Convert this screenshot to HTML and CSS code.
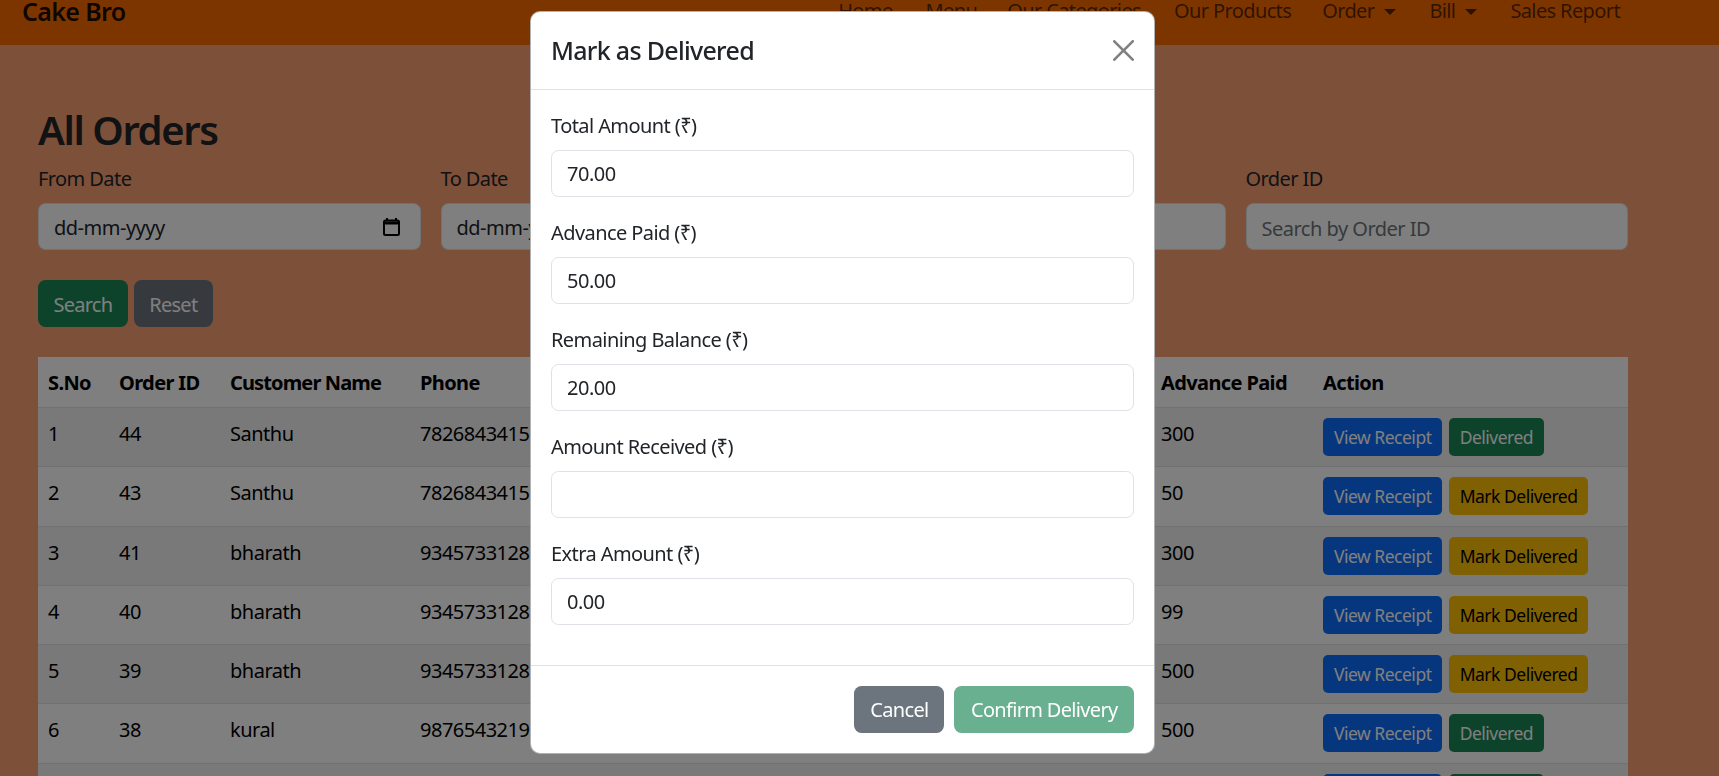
FILE: index.html
```html
<!DOCTYPE html>
<html lang="en">
<head>
  <meta charset="UTF-8">
  <meta name="viewport" content="width=device-width, initial-scale=1.0">
  <title>All Orders</title>
  <link rel="stylesheet" href="styles.css">
</head>
<body>
  <nav class="navbar">
    <a class="brand" href="#">Cake Bro</a>
    <ul class="nav-links">
      <li><a href="#">Home</a></li>
      <li><a href="#">Menu</a></li>
      <li><a href="#">Our Categories</a></li>
      <li><a href="#">Our Products</a></li>
      <li><a class="dropdown" href="#">Order</a></li>
      <li><a class="dropdown" href="#">Bill</a></li>
      <li><a href="#">Sales Report</a></li>
    </ul>
  </nav>

  <main class="content">
    <h2>All Orders</h2>
    <form class="filters">
      <div>
        <label class="form-label">From Date</label>
        <div class="form-control date-field">
          <span>dd-mm-yyyy</span>
          <svg class="calendar" width="17" height="18" viewBox="0 0 17 18"><path d="M4 0v3M13 0v3" stroke="#000" stroke-width="2"/><rect x="1" y="2.5" width="15" height="14.500" rx="1.5" fill="none" stroke="#000" stroke-width="2"/><path d="M1 5h15" stroke="#000" stroke-width="3"/></svg>
        </div>
      </div>
      <div>
        <label class="form-label">To Date</label>
        <div class="form-control date-field">
          <span>dd-mm-yyyy</span>
          <svg class="calendar" width="17" height="18" viewBox="0 0 17 18"><path d="M4 0v3M13 0v3" stroke="#000" stroke-width="2"/><rect x="1" y="2.5" width="15" height="14.500" rx="1.5" fill="none" stroke="#000" stroke-width="2"/><path d="M1 5h15" stroke="#000" stroke-width="3"/></svg>
        </div>
      </div>
      <div>
        <label class="form-label">Customer Name</label>
        <input class="form-control" type="text">
      </div>
      <div>
        <label class="form-label">Order ID</label>
        <input class="form-control" type="text" placeholder="Search by Order ID">
      </div>
    </form>
    <div class="filter-actions">
      <button class="btn btn-success">Search</button>
      <button class="btn btn-secondary">Reset</button>
    </div>

    <table class="orders">
      <colgroup>
        <col class="col-sno">
        <col class="col-id">
        <col class="col-name">
        <col class="col-phone">
        <col class="col-total">
        <col class="col-advance">
        <col class="col-action">
      </colgroup>
      <thead>
        <tr><th>S.No</th><th>Order ID</th><th>Customer Name</th><th>Phone</th><th></th><th>Advance Paid</th><th>Action</th></tr>
      </thead>
      <tbody>
        <tr>
          <td>1</td><td>44</td><td>Santhu</td><td>7826843415</td><td></td><td>300</td>
          <td><button class="btn btn-sm btn-primary">View Receipt</button> <button class="btn btn-sm btn-success">Delivered</button></td>
        </tr>
        <tr>
          <td>2</td><td>43</td><td>Santhu</td><td>7826843415</td><td></td><td>50</td>
          <td><button class="btn btn-sm btn-primary">View Receipt</button> <button class="btn btn-sm btn-warning">Mark Delivered</button></td>
        </tr>
        <tr>
          <td>3</td><td>41</td><td>bharath</td><td>9345733128</td><td></td><td>300</td>
          <td><button class="btn btn-sm btn-primary">View Receipt</button> <button class="btn btn-sm btn-warning">Mark Delivered</button></td>
        </tr>
        <tr>
          <td>4</td><td>40</td><td>bharath</td><td>9345733128</td><td></td><td>99</td>
          <td><button class="btn btn-sm btn-primary">View Receipt</button> <button class="btn btn-sm btn-warning">Mark Delivered</button></td>
        </tr>
        <tr>
          <td>5</td><td>39</td><td>bharath</td><td>9345733128</td><td></td><td>500</td>
          <td><button class="btn btn-sm btn-primary">View Receipt</button> <button class="btn btn-sm btn-warning">Mark Delivered</button></td>
        </tr>
        <tr>
          <td>6</td><td>38</td><td>kural</td><td>9876543219</td><td></td><td>500</td>
          <td><button class="btn btn-sm btn-primary">View Receipt</button> <button class="btn btn-sm btn-success">Delivered</button></td>
        </tr>
        <tr>
          <td></td><td></td><td></td><td></td><td></td><td></td>
          <td><button class="btn btn-sm btn-primary">View Receipt</button> <button class="btn btn-sm btn-success">Delivered</button></td>
        </tr>
      </tbody>
    </table>
  </main>

  <div class="backdrop"></div>

  <div class="modal">
    <div class="modal-content">
      <div class="modal-header">
        <h5>Mark as Delivered</h5>
        <svg class="btn-close" width="21" height="21" viewBox="0 0 16 16"><path d="M.293.293a1 1 0 0 1 1.414 0L8 6.586 14.293.293a1 1 0 1 1 1.414 1.414L9.414 8l6.293 6.293a1 1 0 0 1-1.414 1.414L8 9.414l-6.293 6.293a1 1 0 0 1-1.414-1.414L6.586 8 .293 1.707a1 1 0 0 1 0-1.414z"/></svg>
      </div>
      <div class="modal-body">
        <div class="field">
          <label class="form-label">Total Amount (₹)</label>
          <input class="form-control" type="text" value="70.00">
        </div>
        <div class="field">
          <label class="form-label">Advance Paid (₹)</label>
          <input class="form-control" type="text" value="50.00">
        </div>
        <div class="field">
          <label class="form-label">Remaining Balance (₹)</label>
          <input class="form-control" type="text" value="20.00">
        </div>
        <div class="field">
          <label class="form-label">Amount Received (₹)</label>
          <input class="form-control" type="text">
        </div>
        <div class="field">
          <label class="form-label">Extra Amount (₹)</label>
          <input class="form-control" type="text" value="0.00">
        </div>
      </div>
      <div class="modal-footer">
        <button class="btn btn-secondary">Cancel</button>
        <button class="btn btn-success btn-disabled">Confirm Delivery</button>
      </div>
    </div>
  </div>
</body>
</html>
```

FILE: styles.css
```css
* {
  margin: 0;
  padding: 0;
  box-sizing: border-box;
}

body {
  background-color: #faa072;
  color: #212529;
  font-family: "Noto Sans", Arial, sans-serif;
  font-size: 20px;
  line-height: 30px;
  letter-spacing: -0.5px;
  overflow: hidden;
  height: 100vh;
}

/* Navbar, page is scrolled a little so it sits above the top edge */
.navbar {
  background-color: #fa6a00;
  height: 69px;
  margin-top: -24px;
  padding: 0 99px 0 22px;
  display: flex;
  align-items: center;
  justify-content: space-between;
}

.brand {
  color: rgba(0, 0, 0, 0.9);
  font-size: 25px;
  font-weight: 600;
  letter-spacing: -0.65px;
  text-decoration: none;
}

.nav-links {
  display: flex;
  gap: 33px;
  list-style: none;
  letter-spacing: -0.62px;
}

.nav-links li:nth-child(3) {
  margin-left: -3px;
}

.nav-links li:nth-child(5) {
  margin-left: -2px;
}

.nav-links a {
  color: rgba(0, 0, 0, 0.65);
  text-decoration: none;
}

.dropdown::after {
  content: "";
  display: inline-block;
  margin-left: 10px;
  vertical-align: 3px;
  border-top: 6px solid;
  border-left: 6px solid transparent;
  border-right: 6px solid transparent;
}

.content {
  padding: 61px 91px 0 38px;
}

h2 {
  font-size: 40px;
  font-weight: 600;
  line-height: 48px;
  letter-spacing: -1.4px;
  margin-bottom: 9px;
}

.filters {
  display: grid;
  grid-template-columns: repeat(4, 1fr);
  gap: 20px;
}

.filters .form-control {
  padding-top: 9px;
  padding-bottom: 6px;
}

.form-label {
  display: block;
  padding-top: 1px;
  margin-bottom: 9px;
  letter-spacing: -0.58px;
}

.form-control {
  width: 100%;
  height: 47px;
  padding: 7.5px 15px;
  background-color: #fff;
  border: 1px solid #dee2e6;
  border-radius: 7.5px;
  color: #212529;
  font: inherit;
  letter-spacing: -0.5px;
}

.form-control::placeholder {
  color: #6c757d;
}

.date-field {
  display: flex;
  align-items: center;
  justify-content: space-between;
}

.calendar {
  margin-right: 5px;
  margin-bottom: 2px;
}

.filter-actions {
  display: flex;
  gap: 6px;
  margin-top: 30px;
  margin-bottom: 30px;
}

.btn {
  height: 47px;
  padding: 2px 14.500px 0;
  border: 1px solid transparent;
  border-radius: 7.5px;
  color: #fff;
  font: inherit;
  letter-spacing: -0.75px;
}

.btn-sm {
  height: 38px;
  padding: 0 10px;
  border-radius: 5px;
  font-size: 17.5px;
  line-height: 26px;
  letter-spacing: -0.5px;
}

.btn-sm + .btn-sm {
  margin-left: 2px;
  padding: 0 9.5px;
}

.btn-primary { background-color: #0d6efd; }
.btn-secondary { background-color: #6c757d; }
.btn-success { background-color: #198754; }
.btn-warning { background-color: #ffc107; color: #000; }
.btn-disabled { opacity: 0.65; }

/* Orders table */
.orders {
  width: 100%;
  table-layout: fixed;
  border-collapse: collapse;
  background-color: #fff;
  color: #000;
}

.col-sno { width: 71px; }
.col-id { width: 111px; }
.col-name { width: 190px; }
.col-phone { width: 200px; }
.col-advance { width: 162px; }
.col-action { width: 315px; }

.orders th,
.orders td {
  padding: 11px 10px 9px;
  text-align: left;
  vertical-align: top;
  border-bottom: 1px solid #dee2e6;
}

.orders td {
  height: 59.25px;
}

.orders td:last-child {
  padding-top: 10px;
}

.orders th {
  font-weight: 700;
  letter-spacing: -0.62px;
}

.orders th:nth-child(3) {
  letter-spacing: -0.87px;
}

.orders tbody tr:nth-child(odd) {
  background-color: #f2f2f2;
}

/* Modal */
.backdrop {
  position: fixed;
  inset: 0;
  background-color: rgba(0, 0, 0, 0.5);
}

.modal {
  position: fixed;
  top: 11px;
  left: 530px;
  width: 625px;
}

.modal-content {
  background-color: #fff;
  border: 1px solid rgba(0, 0, 0, 0.3);
  border-radius: 10px;
}

.modal-header {
  height: 78px;
  padding: 0 20px;
  display: flex;
  align-items: center;
  justify-content: space-between;
  border-bottom: 1px solid #dee2e6;
}

.modal-header h5 {
  font-size: 25px;
  font-weight: 500;
  line-height: 37.5px;
  letter-spacing: -0.7px;
}

.btn-close {
  fill: #808080;
}

.modal-body {
  padding: 20px;
}

.field {
  margin-bottom: 20px;
}

.modal-footer {
  display: flex;
  justify-content: flex-end;
  gap: 10px;
  padding: 20px;
  border-top: 1px solid #dee2e6;
}

.modal-footer .btn {
  padding-top: 0;
  letter-spacing: -0.68px;
}

.modal-footer .btn-secondary {
  padding-left: 15px;
  padding-right: 15px;
}

.modal-footer .btn-disabled {
  padding-left: 15.5px;
  padding-right: 15.5px;
}
```
